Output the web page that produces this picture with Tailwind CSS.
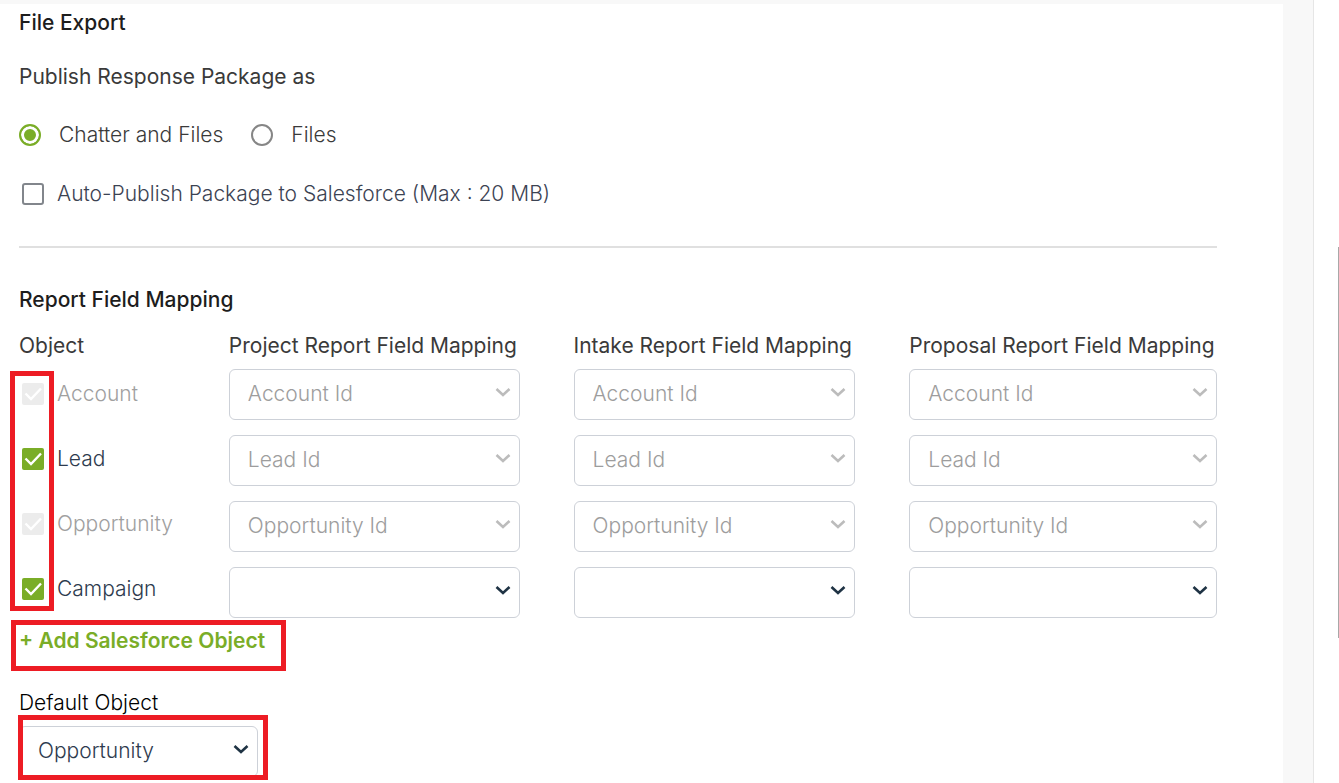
<!DOCTYPE html>
<html lang="en">
<head>
    <meta charset="UTF-8">
    <meta name="viewport" content="width=device-width, initial-scale=1.0">
    <title>Salesforce Settings</title>
    <script src="https://cdn.jsdelivr.net/npm/@tailwindcss/browser@4"></script>
</head>
<body class="bg-white font-['Inter',sans-serif] text-[21px] leading-6 font-light text-[#3a3a3a]">
    <div class="flex min-h-screen">
        <div class="flex-1 bg-[#f8f8f8] border-r border-[#e6e6e6] pt-1 pr-[30px] flex">
            <main class="flex-1 bg-white pl-[19px] pr-[66px] pt-[7px]">

                <!-- file export -->
                <section class="pb-10 border-b-2 border-[#e0e0e0]">
                    <h2 class="font-medium text-[#1d1d1d]">File Export</h2>
                    <fieldset class="mt-[30px]">
                        <legend class="font-normal">Publish Response Package as</legend>
                        <div class="mt-[34px] flex items-center gap-7">
                            <label class="flex items-center gap-[18px]">
                                <input type="radio" name="publish" checked class="appearance-none size-[22px] rounded-full border-2 border-[#868686] checked:border-[#7aad27] checked:bg-[#7aad27] checked:shadow-[inset_0_0_0_3px_white]">
                                Chatter and Files
                            </label>
                            <label class="flex items-center gap-[18px]">
                                <input type="radio" name="publish" class="appearance-none size-[22px] rounded-full border-2 border-[#868686] checked:border-[#7aad27] checked:bg-[#7aad27] checked:shadow-[inset_0_0_0_3px_white]">
                                Files
                            </label>
                        </div>
                    </fieldset>
                    <label class="mt-[35px] pl-[3px] flex items-center gap-[13px] text-[#3c4353]">
                        <input type="checkbox" class="appearance-none size-[22px] rounded-[3px] border-2 border-[#82868c]">
                        Auto-Publish Package to Salesforce (Max : 20 MB)
                    </label>
                </section>

                <!-- report field mapping -->
                <section class="pt-10">
                    <h2 class="font-medium text-[#1d1d1d]">Report Field Mapping</h2>
                    <div class="mt-[22px] grid grid-cols-[156fr_291fr_282fr_308fr] gap-x-[54px]">
                        <div>
                            <h3 class="font-normal">Object</h3>
                            <div class="relative mt-3 pt-3 pl-[3px] flex flex-col gap-[41px] text-[#2e3b4e]">
                                <label class="flex items-center gap-[13px] text-[#a0a0a0]">
                                    <span class="relative size-[22px]">
                                        <input type="checkbox" checked disabled class="block appearance-none size-[22px] rounded-[2px] bg-[#ececec]">
                                        <svg class="absolute inset-0" viewBox="0 0 22 22" fill="none" stroke="#fff" stroke-width="2.4"><path d="M3.5 10.5 9 16 19 5.5"/></svg>
                                    </span>
                                    Account
                                </label>
                                <label class="flex items-center gap-[13px]">
                                    <span class="relative size-[22px]">
                                        <input type="checkbox" checked class="block appearance-none size-[22px] rounded-[2px] bg-[#7aad27]">
                                        <svg class="absolute inset-0" viewBox="0 0 22 22" fill="none" stroke="#fff" stroke-width="2.4"><path d="M3.5 10.5 9 16 19 5.5"/></svg>
                                    </span>
                                    Lead
                                </label>
                                <label class="flex items-center gap-[13px] text-[#a0a0a0]">
                                    <span class="relative size-[22px]">
                                        <input type="checkbox" checked disabled class="block appearance-none size-[22px] rounded-[2px] bg-[#ececec]">
                                        <svg class="absolute inset-0" viewBox="0 0 22 22" fill="none" stroke="#fff" stroke-width="2.4"><path d="M3.5 10.5 9 16 19 5.5"/></svg>
                                    </span>
                                    Opportunity
                                </label>
                                <label class="flex items-center gap-[13px]">
                                    <span class="relative size-[22px]">
                                        <input type="checkbox" checked class="block appearance-none size-[22px] rounded-[2px] bg-[#7aad27]">
                                        <svg class="absolute inset-0" viewBox="0 0 22 22" fill="none" stroke="#fff" stroke-width="2.4"><path d="M3.5 10.5 9 16 19 5.5"/></svg>
                                    </span>
                                    Campaign
                                </label>
                                <div class="absolute -left-[9px] top-[1px] -bottom-[10px] w-11 border-5 border-[#ed1c24] pointer-events-none"></div>
                            </div>
                        </div>

                        <div>
                            <h3 class="font-normal whitespace-nowrap">Project Report Field Mapping</h3>
                            <div class="mt-[11px] flex flex-col gap-[15px]">
                                <div class="relative">
                                    <select disabled aria-label="Project account field" class="block appearance-none w-full h-[51px] rounded-md border border-[#cdd1d8] bg-white px-[18px] pb-[2px] text-[#9d9d9d] opacity-100"><option>Account Id</option></select>
                                    <svg class="absolute right-[9px] top-[15px] size-4 pointer-events-none" viewBox="0 0 16 16" fill="none" stroke="#bcbcbc" stroke-width="2.6"><path d="M1.5 5 8 11 14.5 5"/></svg>
                                </div>
                                <div class="relative">
                                    <select disabled aria-label="Project lead field" class="block appearance-none w-full h-[51px] rounded-md border border-[#cdd1d8] bg-white px-[18px] pb-[2px] text-[#9d9d9d] opacity-100"><option>Lead Id</option></select>
                                    <svg class="absolute right-[9px] top-[15px] size-4 pointer-events-none" viewBox="0 0 16 16" fill="none" stroke="#bcbcbc" stroke-width="2.6"><path d="M1.5 5 8 11 14.5 5"/></svg>
                                </div>
                                <div class="relative">
                                    <select disabled aria-label="Project opportunity field" class="block appearance-none w-full h-[51px] rounded-md border border-[#cdd1d8] bg-white px-[18px] pb-[2px] text-[#9d9d9d] opacity-100"><option>Opportunity Id</option></select>
                                    <svg class="absolute right-[9px] top-[15px] size-4 pointer-events-none" viewBox="0 0 16 16" fill="none" stroke="#bcbcbc" stroke-width="2.6"><path d="M1.5 5 8 11 14.5 5"/></svg>
                                </div>
                                <div class="relative">
                                    <select aria-label="Project campaign field" class="block appearance-none w-full h-[51px] rounded-md border border-[#cdd1d8] bg-white px-[18px] pb-[2px] text-[#2e3b4e]"><option></option></select>
                                    <svg class="absolute right-[9px] top-[15px] size-4 pointer-events-none" viewBox="0 0 16 16" fill="none" stroke="#1f3344" stroke-width="2.6"><path d="M1.5 5 8 11 14.5 5"/></svg>
                                </div>
                            </div>
                        </div>

                        <div>
                            <h3 class="font-normal whitespace-nowrap">Intake Report Field Mapping</h3>
                            <div class="mt-[11px] flex flex-col gap-[15px]">
                                <div class="relative">
                                    <select disabled aria-label="Intake account field" class="block appearance-none w-full h-[51px] rounded-md border border-[#cdd1d8] bg-white px-[18px] pb-[2px] text-[#9d9d9d] opacity-100"><option>Account Id</option></select>
                                    <svg class="absolute right-[9px] top-[15px] size-4 pointer-events-none" viewBox="0 0 16 16" fill="none" stroke="#bcbcbc" stroke-width="2.6"><path d="M1.5 5 8 11 14.5 5"/></svg>
                                </div>
                                <div class="relative">
                                    <select disabled aria-label="Intake lead field" class="block appearance-none w-full h-[51px] rounded-md border border-[#cdd1d8] bg-white px-[18px] pb-[2px] text-[#9d9d9d] opacity-100"><option>Lead Id</option></select>
                                    <svg class="absolute right-[9px] top-[15px] size-4 pointer-events-none" viewBox="0 0 16 16" fill="none" stroke="#bcbcbc" stroke-width="2.6"><path d="M1.5 5 8 11 14.5 5"/></svg>
                                </div>
                                <div class="relative">
                                    <select disabled aria-label="Intake opportunity field" class="block appearance-none w-full h-[51px] rounded-md border border-[#cdd1d8] bg-white px-[18px] pb-[2px] text-[#9d9d9d] opacity-100"><option>Opportunity Id</option></select>
                                    <svg class="absolute right-[9px] top-[15px] size-4 pointer-events-none" viewBox="0 0 16 16" fill="none" stroke="#bcbcbc" stroke-width="2.6"><path d="M1.5 5 8 11 14.5 5"/></svg>
                                </div>
                                <div class="relative">
                                    <select aria-label="Intake campaign field" class="block appearance-none w-full h-[51px] rounded-md border border-[#cdd1d8] bg-white px-[18px] pb-[2px] text-[#2e3b4e]"><option></option></select>
                                    <svg class="absolute right-[9px] top-[15px] size-4 pointer-events-none" viewBox="0 0 16 16" fill="none" stroke="#1f3344" stroke-width="2.6"><path d="M1.5 5 8 11 14.5 5"/></svg>
                                </div>
                            </div>
                        </div>

                        <div>
                            <h3 class="font-normal whitespace-nowrap">Proposal Report Field Mapping</h3>
                            <div class="mt-[11px] flex flex-col gap-[15px]">
                                <div class="relative">
                                    <select disabled aria-label="Proposal account field" class="block appearance-none w-full h-[51px] rounded-md border border-[#cdd1d8] bg-white px-[18px] pb-[2px] text-[#9d9d9d] opacity-100"><option>Account Id</option></select>
                                    <svg class="absolute right-[9px] top-[15px] size-4 pointer-events-none" viewBox="0 0 16 16" fill="none" stroke="#bcbcbc" stroke-width="2.6"><path d="M1.5 5 8 11 14.5 5"/></svg>
                                </div>
                                <div class="relative">
                                    <select disabled aria-label="Proposal lead field" class="block appearance-none w-full h-[51px] rounded-md border border-[#cdd1d8] bg-white px-[18px] pb-[2px] text-[#9d9d9d] opacity-100"><option>Lead Id</option></select>
                                    <svg class="absolute right-[9px] top-[15px] size-4 pointer-events-none" viewBox="0 0 16 16" fill="none" stroke="#bcbcbc" stroke-width="2.6"><path d="M1.5 5 8 11 14.5 5"/></svg>
                                </div>
                                <div class="relative">
                                    <select disabled aria-label="Proposal opportunity field" class="block appearance-none w-full h-[51px] rounded-md border border-[#cdd1d8] bg-white px-[18px] pb-[2px] text-[#9d9d9d] opacity-100"><option>Opportunity Id</option></select>
                                    <svg class="absolute right-[9px] top-[15px] size-4 pointer-events-none" viewBox="0 0 16 16" fill="none" stroke="#bcbcbc" stroke-width="2.6"><path d="M1.5 5 8 11 14.5 5"/></svg>
                                </div>
                                <div class="relative">
                                    <select aria-label="Proposal campaign field" class="block appearance-none w-full h-[51px] rounded-md border border-[#cdd1d8] bg-white px-[18px] pb-[2px] text-[#2e3b4e]"><option></option></select>
                                    <svg class="absolute right-[9px] top-[15px] size-4 pointer-events-none" viewBox="0 0 16 16" fill="none" stroke="#1f3344" stroke-width="2.6"><path d="M1.5 5 8 11 14.5 5"/></svg>
                                </div>
                            </div>
                        </div>
                    </div>

                    <!-- add button, outlined in red -->
                    <div class="mt-[2px] -ml-2 w-[275px] h-[51px] border-5 border-[#ed1c24] pl-[3px] pt-1">
                        <button type="button" class="block font-semibold text-[#7aad27] whitespace-nowrap">+ Add Salesforce Object</button>
                    </div>
                </section>

                <!-- default object -->
                <section class="mt-5">
                    <label for="default-object" class="block text-black">Default Object</label>
                    <div class="relative mt-[11px] w-[239px]">
                        <select id="default-object" class="block appearance-none w-full h-[51px] rounded-md border border-[#cdd1d8] bg-white px-[18px] pb-[2px] text-[#2e3b4e]"><option>Opportunity</option></select>
                        <svg class="absolute right-[9px] top-[15px] size-4 pointer-events-none" viewBox="0 0 16 16" fill="none" stroke="#1f3344" stroke-width="2.6"><path d="M1.5 5 8 11 14.5 5"/></svg>
                        <div class="absolute -left-px -right-[10px] -top-[11px] -bottom-[3px] border-5 border-[#ed1c24] pointer-events-none"></div>
                    </div>
                </section>
            </main>
        </div>

        <!-- scroll track -->
        <div class="w-[25px] flex justify-end pt-[247px]">
            <div class="w-px h-[391px] bg-[#a8a8a8]"></div>
        </div>
    </div>
</body>
</html>
